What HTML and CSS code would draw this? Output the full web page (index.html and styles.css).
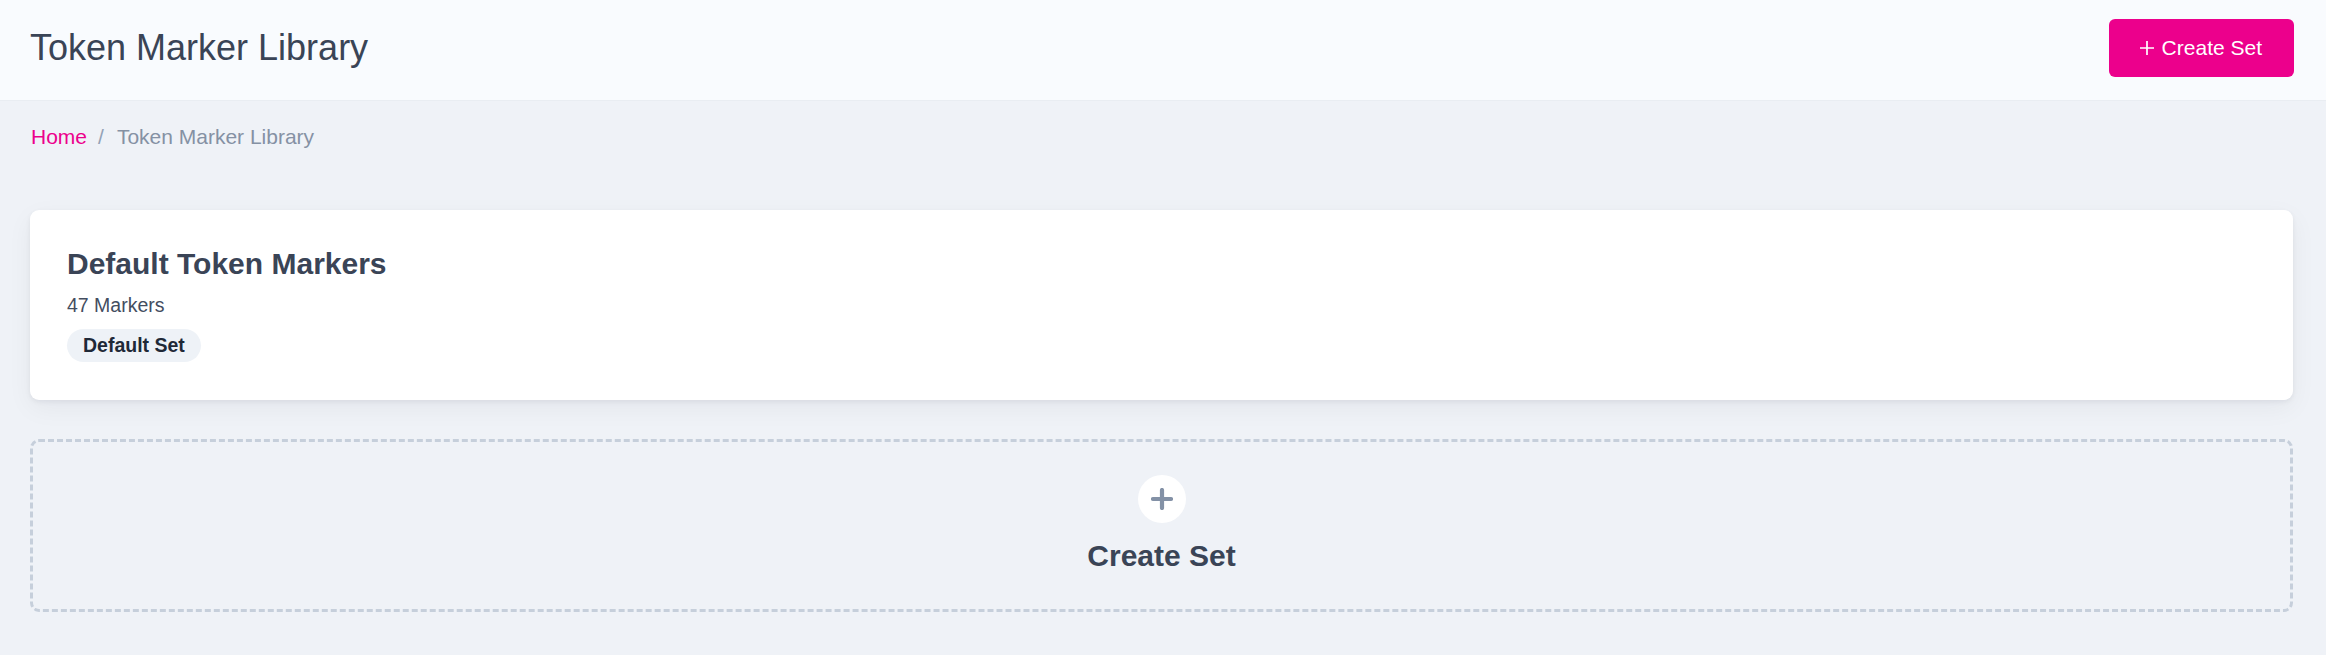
FILE: index.html
```html
<!DOCTYPE html>
<html lang="en">
<head>
<meta charset="utf-8">
<title>Token Marker Library</title>
<link rel="stylesheet" href="styles.css">
</head>
<body>
<header class="topbar">
  <h1 class="topbar-title">Token Marker Library</h1>
  <button class="btn-primary" type="button">
    <svg class="btn-icon" viewBox="0 0 16 16" width="16" height="16" aria-hidden="true"><path d="M8 1v14M1 8h14" stroke="currentColor" stroke-width="1.7" fill="none"/></svg>
    <span>Create Set</span>
  </button>
</header>
<main class="content">
  <nav class="breadcrumb">
    <a class="crumb-link" href="#">Home</a>
    <span class="crumb-sep">/</span>
    <span class="crumb-current">Token Marker Library</span>
  </nav>
  <section class="set-card">
    <h2 class="set-title">Default Token Markers</h2>
    <p class="set-count">47 Markers</p>
    <span class="badge">Default Set</span>
  </section>
  <section class="create-box">
    <span class="create-circle">
      <svg viewBox="0 0 22 22" width="22" height="22" aria-hidden="true"><path d="M11 2v18M2 11h18" stroke="currentColor" stroke-width="4.2" stroke-linecap="round" fill="none"/></svg>
    </span>
    <span class="create-label">Create Set</span>
  </section>
</main>
</body>
</html>
```
FILE: styles.css
```css
* { box-sizing: border-box; }
html, body { margin: 0; padding: 0; }
body {
  background: #eff2f7;
  font-family: "Liberation Sans", Arial, sans-serif;
  color: #374357;
}
.topbar {
  height: 101px;
  background: #f9fbfe;
  border-bottom: 1px solid #e9edf2;
  display: flex;
  align-items: center;
  justify-content: space-between;
  padding: 0 32px 4px 30px;
}
.topbar-title {
  margin: 0;
  font-size: 36px;
  line-height: 54px;
  font-weight: 400;
  color: #3a4456;
}
.btn-primary {
  height: 58px;
  padding: 0 32px 0 30px;
  background: #ec008c;
  color: #ffffff;
  border: none;
  border-radius: 6px;
  display: flex;
  align-items: center;
  gap: 7px;
  font-family: "Liberation Sans", Arial, sans-serif;
  font-size: 21px;
  cursor: pointer;
}
.btn-icon { display: block; }
.content {
  padding: 20px 33px 0 30px;
}
.breadcrumb {
  display: flex;
  align-items: center;
  font-size: 21px;
  line-height: 32px;
  padding-left: 1px;
}
.crumb-link { color: #ec008c; text-decoration: none; }
.crumb-sep { color: #94a2b6; margin: 0 13px 0 11px; }
.crumb-current { color: #8591a4; }
.set-card {
  margin-top: 57px;
  background: #ffffff;
  border-radius: 9px;
  padding: 36px 37px 38px;
  box-shadow: 0 2px 5px rgba(15, 23, 42, 0.06), 0 8px 26px rgba(15, 23, 42, 0.05);
}
.set-title {
  margin: 0;
  font-size: 30px;
  line-height: 36px;
  font-weight: 700;
  color: #3a4456;
}
.set-count {
  margin: 9px 0 0;
  font-size: 19.5px;
  line-height: 29px;
  color: #434d5f;
}
.badge {
  display: inline-block;
  margin-top: 9px;
  padding: 3px 16px;
  background: #eef2f7;
  border-radius: 17px;
  font-size: 19.5px;
  line-height: 27px;
  font-weight: 700;
  color: #1f2937;
}
.create-box {
  margin-top: 39px;
  border: 3px dashed #c6cfdb;
  border-radius: 9px;
  padding: 33px 0 35px;
  display: flex;
  flex-direction: column;
  align-items: center;
  gap: 15px;
}
.create-circle {
  width: 48px;
  height: 48px;
  border-radius: 50%;
  background: #ffffff;
  color: #8391a6;
  display: flex;
  align-items: center;
  justify-content: center;
}
.create-circle svg { display: block; }
.create-label {
  font-size: 30px;
  line-height: 36px;
  font-weight: 700;
  color: #3a4456;
}
```
